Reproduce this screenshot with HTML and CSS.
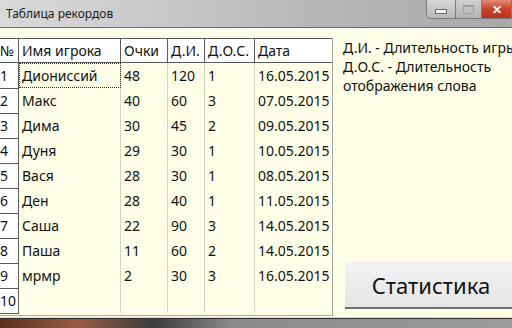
FILE: index.html
```html
<!DOCTYPE html>
<html lang="ru">
<head>
  <meta charset="UTF-8">
  <title>Таблица рекордов</title>
  <link rel="stylesheet" href="styles.css">
</head>
<body>
  <div class="window">
    <div class="titlebar">
      <span class="title">Таблица рекордов</span>
      <div class="controls">
        <div class="ctl min"><span class="min-bar"></span></div>
        <div class="ctl max"><span class="max-box"></span></div>
        <div class="ctl close">&#x2715;</div>
      </div>
    </div>

    <div class="client">
      <div class="grid-wrap">
        <table class="grid">
          <thead>
            <tr>
              <th class="rh">№</th>
              <th class="c-name">Имя игрока</th>
              <th class="c-score">Очки</th>
              <th class="c-di">Д.И.</th>
              <th class="c-dos">Д.О.С.</th>
              <th class="c-date">Дата</th>
            </tr>
          </thead>
          <tbody>
            <tr><td class="rh">1</td><td class="focus">Диониссий</td><td>48</td><td>120</td><td>1</td><td>16.05.2015</td></tr>
            <tr><td class="rh">2</td><td>Макс</td><td>40</td><td>60</td><td>3</td><td>07.05.2015</td></tr>
            <tr><td class="rh">3</td><td>Дима</td><td>30</td><td>45</td><td>2</td><td>09.05.2015</td></tr>
            <tr><td class="rh">4</td><td>Дуня</td><td>29</td><td>30</td><td>1</td><td>10.05.2015</td></tr>
            <tr><td class="rh">5</td><td>Вася</td><td>28</td><td>30</td><td>1</td><td>08.05.2015</td></tr>
            <tr><td class="rh">6</td><td>Ден</td><td>28</td><td>40</td><td>1</td><td>11.05.2015</td></tr>
            <tr><td class="rh">7</td><td>Саша</td><td>22</td><td>90</td><td>3</td><td>14.05.2015</td></tr>
            <tr><td class="rh">8</td><td>Паша</td><td>11</td><td>60</td><td>2</td><td>14.05.2015</td></tr>
            <tr><td class="rh">9</td><td>мрмр</td><td>2</td><td>30</td><td>3</td><td>16.05.2015</td></tr>
            <tr><td class="rh">10</td><td></td><td></td><td></td><td></td><td></td></tr>
          </tbody>
        </table>
      </div>

      <div class="side">
        <div class="legend">
          <div>Д.И. - Длительность игры</div>
          <div>Д.О.С. - Длительность</div>
          <div>отображения слова</div>
        </div>
        <button class="stats">Статистика</button>
      </div>
    </div>

    <div class="frame-bottom"></div>
  </div>
</body>
</html>
```

FILE: styles.css
```css
html, body {
  margin: 0;
  padding: 0;
}
body {
  width: 512px;
  height: 328px;
  overflow: hidden;
  font-family: "Noto Sans", "Open Sans", sans-serif;
}
.window {
  display: flex;
  flex-direction: column;
  height: 328px;
}

/* title bar */
.titlebar {
  height: 28px;
  flex: none;
  display: flex;
  justify-content: space-between;
  background: linear-gradient(to right, #d9d9d9 0%, #c9c9c9 30%, #b8b8b8 60%, #a9a9a9 100%);
  border-bottom: 1px solid #6d6d6d;
  box-sizing: border-box;
}
.title {
  font-size: 12px;
  color: #1c1c1c;
  padding: 5px 0 0 6px;
}
.controls {
  display: flex;
  align-items: flex-start;
}
.ctl {
  height: 19px;
  box-sizing: border-box;
  border: 1px solid #7b7b7b;
  border-top: none;
  display: flex;
  align-items: center;
  justify-content: center;
}
.min {
  width: 30px;
  border-radius: 0 0 0 5px;
  background: linear-gradient(#d6d6d6, #b9b9b9);
}
.min-bar {
  width: 10px;
  height: 3px;
  margin-top: 5px;
  background: #f4f4f4;
  border: 1px solid #6a6a6a;
}
.max {
  width: 26px;
  border-left: none;
  background: linear-gradient(#d0d0d0, #b4b4b4);
}
.max-box {
  width: 9px;
  height: 6px;
  border: 1px solid #a0a0a0;
  border-top-width: 2px;
}
.close {
  width: 30px;
  border-left: none;
  color: #ffffff;
  font-size: 12px;
  font-weight: bold;
  background: linear-gradient(#e28a74, #c8432b 50%, #b93219);
}

/* client area */
.client {
  flex: 1;
  display: flex;
  background: #ffffe8;
  border-top: 1px solid #f6f6f0;
  padding-top: 9px;
  overflow: hidden;
}
.grid-wrap {
  width: 333px;
  flex: none;
  overflow: hidden;
  border-right: 1px solid #a8a8a0;
  border-bottom: 1px solid #a8a8a0;
  height: 278px;
  box-sizing: border-box;
}
.grid {
  border-collapse: collapse;
  table-layout: fixed;
  width: 335px;
  margin-left: -3px;
  font-size: 14px;
  color: #111;
}
.grid th, .grid td {
  text-align: left;
  padding: 0 0 0 3px;
  white-space: nowrap;
  overflow: hidden;
}
.grid th {
  height: 23px;
  font-weight: normal;
  background: #ffffff;
  border: 1px solid #5a5a5a;
}
.grid td {
  height: 25px;
  border-left: 1px solid #d4d4c4;
  background: #ffffe8;
}
.grid .rh {
  width: 18px;
  background: #ffffff;
  border: 1px solid #5a5a5a;
  padding-left: 2px;
}
.grid td.rh {
  height: 24px;
}
.c-name { width: 98px; }
.c-score { width: 43px; }
.c-di { width: 33px; }
.c-dos { width: 46px; }
.c-date { width: 78px; }
.grid td.focus {
  outline: 1px dotted #333;
  outline-offset: -1px;
}

/* right side */
.side {
  flex: 1;
  display: flex;
  flex-direction: column;
  justify-content: space-between;
  padding: 0 0 8px 10px;
  min-width: 0;
}
.legend {
  font-size: 14px;
  line-height: 19px;
  color: #111;
  white-space: nowrap;
}
.stats {
  width: 172px;
  height: 47px;
  margin-left: 2px;
  flex: none;
  font-family: "Noto Sans", "Open Sans", sans-serif;
  font-size: 22px;
  color: #111;
  background: linear-gradient(#f2f2f2, #e6e6e6);
  border: none;
  border-bottom: 2px solid #707070;
  padding: 0;
}

/* bottom window frame */
.frame-bottom {
  height: 10px;
  flex: none;
  border-top: 1px solid #d8d8d8;
  background: linear-gradient(to right, #5a2e22 0%, #9a5a44 15%, #3b3b3b 30%, #8a8a8a 45%, #9c9c9c 100%);
  box-shadow: inset 0 1px 0 #333;
}
```
